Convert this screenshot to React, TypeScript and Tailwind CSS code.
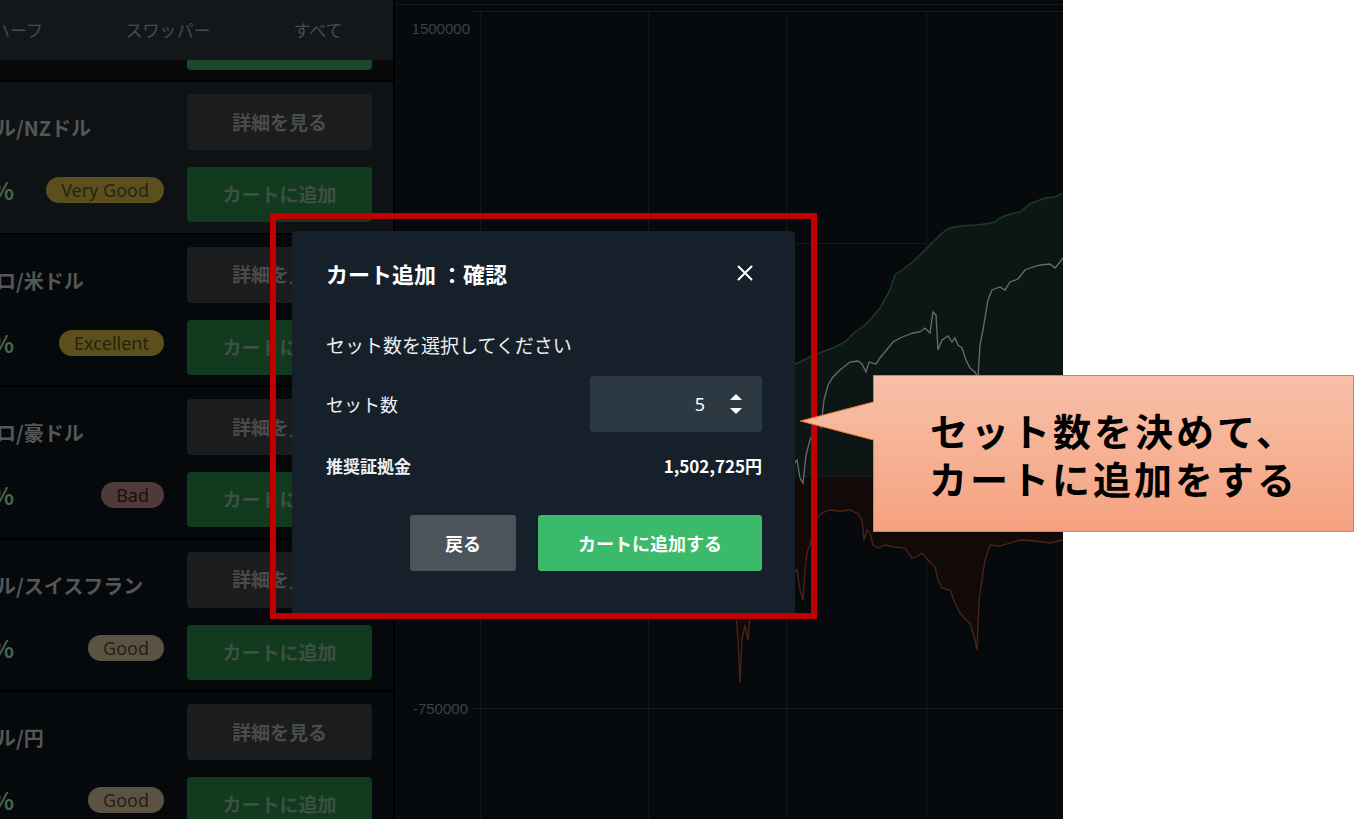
import React from "react";

const JP = "font-['Noto_Sans_CJK_JP','Noto_Sans',sans-serif]";

type Row = {
  name: string;
  badge: string;
  badgeCls: string;
  bg: string;
};

const rows: Row[] = [
  { name: "ル/NZドル", badge: "Very Good", badgeCls: "bg-[#5b501d] text-[#28230f]", bg: "bg-[#0f1215]" },
  { name: "ロ/米ドル", badge: "Excellent", badgeCls: "bg-[#5b4f1c] text-[#28230f]", bg: "bg-[#06090c]" },
  { name: "ロ/豪ドル", badge: "Bad", badgeCls: "bg-[#4e3a38] text-[#1f0d0c]", bg: "bg-[#06090c]" },
  { name: "ル/スイスフラン", badge: "Good", badgeCls: "bg-[#5a5343] text-[#2a1e14]", bg: "bg-[#06090c]" },
  { name: "ル/円", badge: "Good", badgeCls: "bg-[#5a5343] text-[#2a1e14]", bg: "bg-[#06090c]" },
];

function ListRow({ r }: { r: Row }) {
  return (
    <div className={`h-[152.5px] shrink-0 border-b-2 border-black flex pr-[21px] ${r.bg}`}>
      <div className="flex-1 flex flex-col pt-[31px] overflow-hidden">
        <div className="h-[30px] leading-[30px] text-[20px] font-bold text-[#565656] whitespace-nowrap ml-[-4px]">
          {r.name}
        </div>
        <div className="mt-[34px] h-[26px] flex items-center justify-between pr-[23px]">
          <span className="ml-[-9px] text-[24px] font-bold text-[#46654a] leading-none">%</span>
          <span
            className={`h-[26px] px-[15px] rounded-full flex items-center text-[18px] leading-none font-['Noto_Sans',sans-serif] ${r.badgeCls}`}
          >
            {r.badge}
          </span>
        </div>
      </div>
      <div className="w-[185px] shrink-0 pt-[12px] flex flex-col gap-[17px]">
        <div className="h-[56px] rounded-[4px] bg-[#1b1c1e] flex items-center justify-center text-[19px] font-bold text-[#4b4b4b]">
          詳細を見る
        </div>
        <div className="h-[55px] rounded-[4px] bg-[#123a1f] flex items-center justify-center text-[19px] font-bold text-[#3d5042]">
          カートに追加
        </div>
      </div>
    </div>
  );
}

function Chart() {
  const green =
    "M480,476 L520,470 L560,455 L600,440 L640,425 L680,410 L720,395 L760,378 L800,362 L812,356 L822,352 L833,348 L845,342 L855,332 L865,325 L870,320 L880,308 L890,290 L895,275 L905,268 L915,260 L925,250 L935,240 L942,233 L950,228 L960,226 L975,225 L985,224 L995,222 L1000,218 L1010,214 L1020,212 L1030,204 L1045,198 L1055,197 L1063,193";
  const gray =
    "M480,476 L560,470 L640,466 L720,462 L760,466 L790,470 L797,460 L800,478 L803,483 L806,455 L810,440 L815,428 L818,420 L821,427 L824,400 L828,385 L833,377 L840,370 L850,362 L858,361 L862,364 L866,372 L869,362 L876,364 L880,358 L885,352 L893,342 L900,338 L905,336 L913,333 L920,332 L925,328 L930,333 L933,312 L936,315 L938,350 L942,340 L948,336 L952,342 L955,338 L958,345 L962,348 L966,360 L970,368 L975,372 L978,378 L980,345 L983,330 L988,300 L992,290 L1000,287 L1005,290 L1010,282 L1018,279 L1025,270 L1030,268 L1040,265 L1050,264 L1055,268 L1060,262 L1063,258";
  const red =
    "M480,476 L540,500 L600,520 L660,545 L700,560 L730,600 L736,615 L738,640 L740,683 L742,640 L745,625 L748,640 L750,615 L760,590 L790,575 L797,570 L800,590 L803,600 L805,570 L807,553 L810,545 L815,520 L822,513 L830,510 L840,511 L850,510 L858,514 L862,520 L864,540 L867,530 L870,533 L873,545 L878,548 L885,545 L895,547 L905,548 L912,558 L918,556 L922,553 L928,560 L935,567 L938,580 L942,588 L950,590 L955,603 L960,613 L966,620 L970,623 L975,640 L977,650 L979,600 L982,580 L985,560 L990,545 L1000,546 L1010,543 L1020,540 L1035,541 L1050,543 L1063,540";
  return (
    <svg width="668" height="819" viewBox="395 0 668 819" className="block">
      <rect x="395" y="0" width="668" height="819" fill="#060a0d" />
      <line x1="395" y1="4.5" x2="1063" y2="4.5" stroke="#15181b" strokeWidth="1" />
      {[11, 243, 708].map((y) => (
        <line key={y} x1="472" y1={y + 0.5} x2="1063" y2={y + 0.5} stroke="#16191c" strokeWidth="1" />
      ))}
      {[480, 648, 786, 926].map((x) => (
        <line key={x} x1={x + 0.5} y1="11" x2={x + 0.5} y2="819" stroke="#15181b" strokeWidth="1" />
      ))}
      <path d={`${green} L1063,476 L480,476 Z`} fill="#0c1614" />
      <path d={`${red} L1063,476 L480,476 Z`} fill="#120a09" />
      <line x1="480" y1="476.5" x2="1063" y2="476.5" stroke="#141a1a" strokeWidth="1" />
      <path d={green} fill="none" stroke="#1b3d27" strokeWidth="1.5" />
      <path d={gray} fill="none" stroke="#6a6d70" strokeWidth="1.3" />
      <path d={red} fill="none" stroke="#4d2517" strokeWidth="1.3" />
      <text x="470" y="34" textAnchor="end" fontSize="15" fill="#3d4144" fontFamily="'Liberation Sans', Arial, sans-serif">
        1500000
      </text>
      <text x="468" y="714" textAnchor="end" fontSize="15" fill="#3d4144" fontFamily="'Liberation Sans', Arial, sans-serif">
        -750000
      </text>
    </svg>
  );
}

export default function App() {
  const tabs = ["ハーフ", "スワッパー", "すべて"];
  return (
    <div className={`relative w-[1354px] h-[819px] overflow-hidden flex bg-white ${JP}`}>
      {/* Left list panel */}
      <div className="w-[395px] shrink-0 h-full flex flex-col bg-[#06090c] border-r-2 border-black overflow-hidden">
        <div className="h-[60px] shrink-0 bg-[#14171a] flex items-center overflow-hidden">
          <div className="flex ml-[-57px] shrink-0">
            {tabs.map((t) => (
              <div key={t} className="w-[150px] shrink-0 text-center text-[17px] text-[#4a4a4a]">
                {t}
              </div>
            ))}
          </div>
        </div>
        <div className="h-[20px] shrink-0 bg-[#07090b] flex justify-end pr-[21px]">
          <div className="w-[185px] h-[10px] bg-[#1a4829] rounded-b-[4px]" />
        </div>
        <div className="h-[2px] shrink-0 bg-black" />
        {rows.map((r, i) => (
          <ListRow key={i} r={r} />
        ))}
      </div>

      {/* Chart panel */}
      <div className="w-[668px] shrink-0 h-full">
        <Chart />
      </div>

      {/* White area */}
      <div className="flex-1 h-full bg-white" />

      {/* Modal */}
      <div className="absolute left-[292px] top-[231px] w-[503px] h-[388px] bg-[#16202a] rounded-[4px] pl-[34px] pr-[33px] pt-[27px] text-white">
        <div className="h-[30px] flex items-center justify-between">
          <div className="text-[22px] font-bold leading-[30px] whitespace-nowrap">カート追加 ：確認</div>
          <svg width="16" height="16" viewBox="0 0 16 16" className="mr-[9px]">
            <path d="M1.5 1.5 L14.5 14.5 M14.5 1.5 L1.5 14.5" stroke="#ffffff" strokeWidth="2" strokeLinecap="round" />
          </svg>
        </div>
        <div className="mt-[43px] h-[28px] leading-[28px] text-[19px] text-[#eef0f2]">セット数を選択してください</div>
        <div className="mt-[17px] h-[56px] flex items-center justify-between">
          <div className="text-[18px] text-[#eef0f2]">セット数</div>
          <div className="w-[172px] h-[56px] bg-[#2c3943] rounded-[4px] flex items-center justify-end pr-[20px] gap-[25px]">
            <span className="text-[18px] text-white font-['Noto_Sans',sans-serif]">5</span>
            <svg width="12" height="20" viewBox="0 0 12 20">
              <polygon points="0,6 6,0 12,6" fill="#ffffff" />
              <polygon points="0,14 12,14 6,20" fill="#ffffff" />
            </svg>
          </div>
        </div>
        <div className="mt-[20px] h-[28px] flex items-center justify-between">
          <div className="text-[17px] font-bold text-[#eef0f2]">推奨証拠金</div>
          <div className="text-[17px] font-bold text-white">1,502,725円</div>
        </div>
        <div className="mt-[35px] flex justify-end gap-[22px]">
          <div className="w-[106px] h-[56px] bg-[#4b535b] rounded-[3px] flex items-center justify-center text-[18px] font-bold text-white">
            戻る
          </div>
          <div className="w-[224px] h-[56px] bg-[#3cba6b] rounded-[3px] flex items-center justify-center text-[18px] font-bold text-white">
            カートに追加する
          </div>
        </div>
      </div>

      {/* Red highlight frame */}
      <div className="absolute left-[270px] top-[213px] w-[547px] h-[406px] border-[6px] border-[#c00000]" />

      {/* Callout */}
      <div className="absolute left-[800px] top-[375px] w-[554px] h-[157px]">
        <svg width="554" height="157" viewBox="0 0 554 157" className="absolute left-0 top-0">
          <defs>
            <linearGradient id="cg" x1="0" y1="0" x2="0" y2="1">
              <stop offset="0" stopColor="#f7c0a8" />
              <stop offset="1" stopColor="#f5a280" />
            </linearGradient>
          </defs>
          <path d="M73.5,0.5 H553.5 V156.5 H73.5 V65 L0.5,46 L73.5,27 Z" fill="url(#cg)" stroke="#ed7d31" strokeWidth="1" />
        </svg>
        <div className="absolute left-[73px] top-0 w-[481px] h-[157px] flex flex-col items-center justify-center text-black text-[38px] font-bold leading-[48px] tracking-[3px]">
          <div>セット数を決めて、</div>
          <div>カートに追加をする</div>
        </div>
      </div>
    </div>
  );
}
